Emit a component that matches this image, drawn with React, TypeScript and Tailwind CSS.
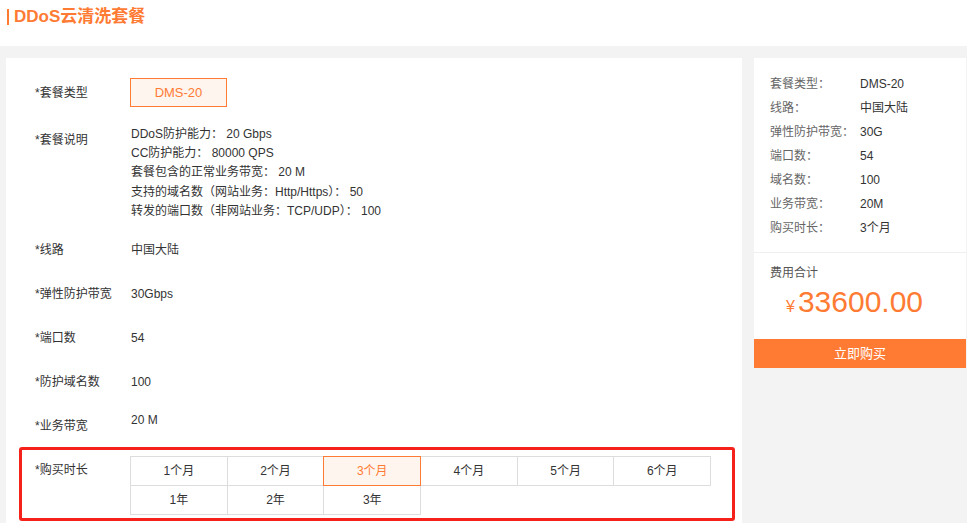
const ORANGE = "#ff7b33";

const summary: [string, string][] = [
  ["套餐类型：", "DMS-20"],
  ["线路：", "中国大陆"],
  ["弹性防护带宽：", "30G"],
  ["端口数：", "54"],
  ["域名数：", "100"],
  ["业务带宽：", "20M"],
  ["购买时长：", "3个月"],
];

const description = [
  "DDoS防护能力： 20 Gbps",
  "CC防护能力： 80000 QPS",
  "套餐包含的正常业务带宽： 20 M",
  "支持的域名数（网站业务：Http/Https）： 50",
  "转发的端口数（非网站业务：TCP/UDP）： 100",
];

const durations = [
  ["1个月", "2个月", "3个月", "4个月", "5个月", "6个月"],
  ["1年", "2年", "3年"],
];

const SimpleRow = ({ label, value, className = "" }: { label: string; value: string; className?: string }) => (
  <div className={`flex pl-[16px] leading-[20px] ${className}`}>
    <div className="w-[96px] shrink-0">{label}</div>
    <div>{value}</div>
  </div>
);

const DurationCell = ({ text, active }: { text: string; active?: boolean }) => (
  <div
    className={`-ml-px -mt-px flex h-[30px] w-[97.7px] items-center justify-center border ${
      active ? "relative z-10 border-[#ff7b33] bg-[#fff5ef] text-[#ff7b33]" : "border-[#dddddd] bg-white text-[#333]"
    }`}
  >
    {text}
  </div>
);

export default function App() {
  return (
    <div
      className="min-h-[523px] bg-[#f3f3f3] text-[12px] text-[#333]"
      style={{ fontFamily: '"Liberation Sans", "Noto Sans CJK SC", sans-serif' }}
    >
      <div className="flex h-[46px] items-start bg-white pl-[7px] pt-[9px]">
        <div className="h-[16px] w-[2px] bg-[#ff7b33]" />
        <div className="-mt-[3px] ml-[5px] text-[17px] font-bold leading-[22px] text-[#ff7b33]">DDoS云清洗套餐</div>
      </div>

      <div className="flex items-start gap-[12px] pl-[6px] pr-px pt-[12px]">
        {/* left: order form */}
        <div className="w-[736px] shrink-0 bg-white px-[13px] pb-[24px] pt-[20px]">
          <div className="flex items-center pl-[16px]">
            <div className="w-[95px] shrink-0 pt-px">*套餐类型</div>
            <div className="flex h-[29px] w-[97px] items-center justify-center border border-[#ff7b33] bg-[#fff5ef] text-[13px] text-[#ff7b33]">
              DMS-20
            </div>
          </div>

          <div className="mt-[18px] flex pl-[16px] leading-[19.2px]">
            <div className="w-[96px] shrink-0 pt-[6px]">*套餐说明</div>
            <div>
              {description.map((line) => (
                <div key={line}>{line}</div>
              ))}
            </div>
          </div>

          <SimpleRow label="*线路" value="中国大陆" className="mt-[19px]" />
          <SimpleRow label="*弹性防护带宽" value="30Gbps" className="mt-[24px]" />
          <SimpleRow label="*端口数" value="54" className="mt-[24px]" />
          <SimpleRow label="*防护域名数" value="100" className="mt-[24px]" />
          <div className="mt-[18px] flex pl-[16px] leading-[20px]">
            <div className="w-[96px] shrink-0 pt-[6px]">*业务带宽</div>
            <div>20 M</div>
          </div>

          <div className="mt-[11px] flex w-[716px] items-start rounded-[3px] border-[3px] border-[#f5211b] pb-[3px] pl-[13px] pt-[6px]">
            <div className="w-[96px] shrink-0 pt-[4px] leading-[20px]">*购买时长</div>
            <div className="pt-px">
              {durations.map((row, i) => (
                <div key={i} className="flex">
                  {row.map((d) => (
                    <DurationCell key={d} text={d} active={d === "3个月"} />
                  ))}
                </div>
              ))}
            </div>
          </div>
        </div>

        {/* right: summary */}
        <div className="w-[212px] shrink-0 bg-white">
          <div className="border-b border-[#efefef] pb-[12px] pl-[16px] pt-[14px]">
            {summary.map(([k, v]) => (
              <div key={k} className="flex leading-[24px]">
                <div className="w-[90px] shrink-0 text-[#666]">{k}</div>
                <div className="text-[#333]">{v}</div>
              </div>
            ))}
          </div>
          <div className="h-[86px] pl-[16px] pt-[10px]">
            <div className="leading-[20px] text-[#555]">费用合计</div>
            <div className="ml-[16px] mt-[1px] flex items-baseline text-[#ff7b33]" style={{ color: ORANGE }}>
              <span className="mr-[3px] text-[16px]">¥</span>
              <span className="text-[30px] leading-[36px]">33600.00</span>
            </div>
          </div>
          <button className="flex h-[29px] w-full items-center justify-center bg-[#ff7b33] text-[13px] text-white">
            立即购买
          </button>
        </div>
      </div>
    </div>
  );
}
